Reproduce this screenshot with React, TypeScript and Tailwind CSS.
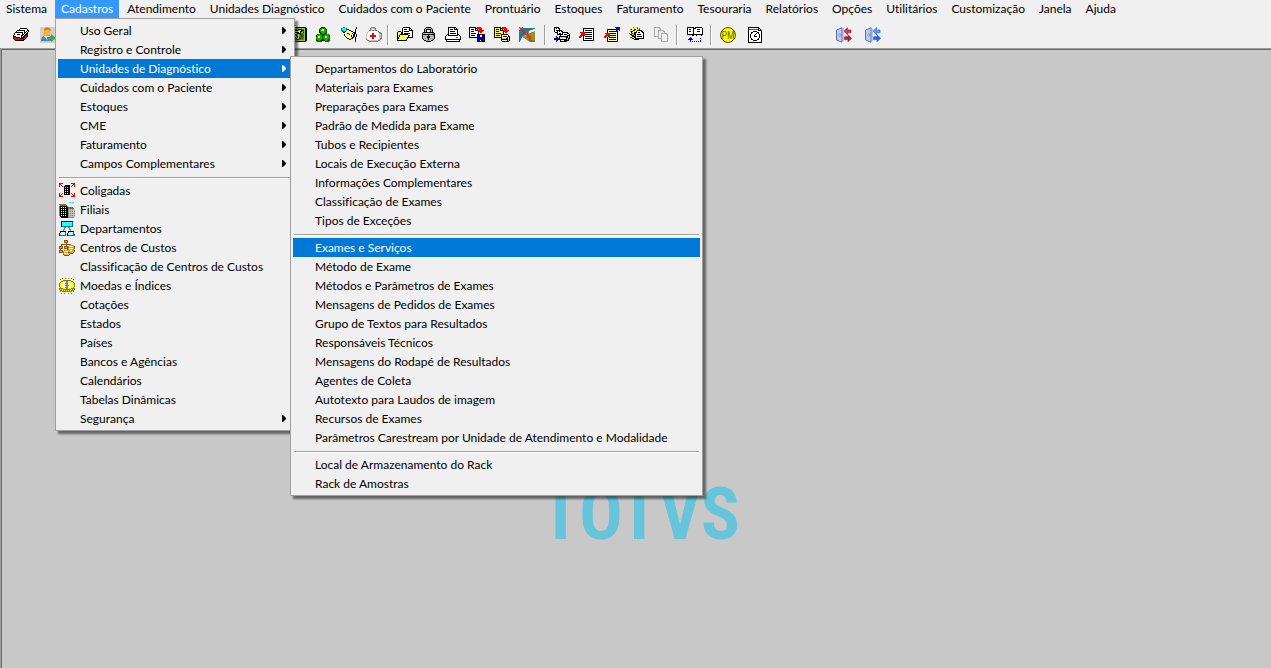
import type { ReactNode } from "react";
import clsx from "clsx";

type MenuEntry = {
  label: string;
  icon?: ReactNode;
  submenu?: boolean;
};

const COLORS: Record<string, string> = {
  k: "#000000",
  w: "#ffffff",
  y: "#ffff00",
  Y: "#ffff99",
  o: "#808000",
  r: "#ff0000",
  g: "#808080",
  a: "#a8a8a8",
  l: "#c0c0c0",
  b: "#0000ff",
  n: "#000080",
  t: "#008080",
  c: "#00ffff",
  C: "#a6f4f4",
  G: "#00b400",
  D: "#006400",
  L: "#7fd03c",
  B: "#8a5a1c",
  T: "#d8a850",
};

/** 16px bitmap icon, one character per pixel. */
function PixelIcon({ rows }: { rows: string[] }) {
  const rects: ReactNode[] = [];
  rows.forEach((row, y) => {
    let x = 0;
    while (x < row.length) {
      const ch = row[x];
      let end = x + 1;
      while (end < row.length && row[end] === ch) end += 1;
      if (COLORS[ch]) {
        rects.push(
          <rect key={`${x}-${y}`} x={x} y={y} width={end - x} height={1} fill={COLORS[ch]} />
        );
      }
      x = end;
    }
  });
  return (
    <svg viewBox="0 0 16 16" className="size-4 shrink-0" shapeRendering="crispEdges" aria-hidden="true">
      {rects}
    </svg>
  );
}

const CARDS = [
  "................",
  ".......kkkkkkk..",
  "......kwwwwwwwk.",
  "....kkkkkkkkwwkk",
  "...kwwwwwwwkwkwk",
  "..kkkkkkkkwkkwk.",
  ".kwwwwwwwkwkwkk.",
  ".kwwkkkwwkkwkkk.",
  "kwwwwwwwkkwkkrk.",
  "kkkwwwwwkwkkrrk.",
  "krrkkkkwkkkrrk..",
  "krrrrrrkkkrrk...",
  ".krrrrrrrrkk....",
  "..kkkkkkkkk.....",
];

const GREEN_BOOK = [
  "kkkkkkkkkkkkkkk.",
  "kLLLLLLLLLLLLLkk",
  "kLGGGGGkkkkGGLkk",
  "kLGkkkkLyykkkLkk",
  "kLGkyyyyykkGGLkk",
  "kLGGkkkkykLLkLkk",
  "kLGGyykkkkGGGLkk",
  "kLGkkGGyGkkGGLkk",
  "kLGyGkGyGGrrrLkk",
  "kLGkyGkyGGkkGLkk",
  "kLGGkykykGGrGLkk",
  "kLGGGkyykkGrGLkk",
  "kLGGGGkkGGGGGLkk",
  "kLLLLLLLLLLLLLkk",
  "kkkkkkkkkkkkkkk.",
];

const CLUSTER = [
  ".....kkkk.......",
  "....kGGGGk......",
  "...kGGyyGGD.....",
  "...kGyyyGGD.....",
  "...kGGGGGGD.....",
  "...kDGGGGDD.....",
  "....kDGGDDk.....",
  ".kGGGkDDkGGGk...",
  "kGGGGGkkGGGGGD..",
  "kGyyGGDGGyyGGD..",
  "GGyyGGDGGyyGGD..",
  "GGGGGGDGGGGGGD..",
  "kGGGGDDkGGGGDD..",
  "kDGGDDkkDGGDDk..",
  ".kDDDk...kDDk...",
];

const HAND = [
  "..tt...........k",
  "tcccct.........k",
  "tccccttk......k.",
  "ttccctYYkk....k.",
  ".nttkYYYYYkk..k.",
  "..nkYYYYYYYYkkk.",
  "...YYYkkYYYkYkk.",
  "...kYYYYkYYYkkyk",
  "...kYYYYYYkYkkyk",
  "....kYYYYYkYkkyk",
  ".....kYYYYYkk.k.",
  "......kkYYkk..k.",
  "........kk....k.",
  "..............k.",
  "..............k.",
];

const KIT = [
  ".....gggg.......",
  "....gllllg......",
  "....gl..lg......",
  "...gglgglggl....",
  "..lwwwwwwwwlg...",
  ".lwwwwwwwwwwlgg.",
  ".lwwwwrrwwwwwlgg",
  "lwwwwwrrwwwwwllg",
  "lwwwrrrrrrwwwllg",
  "lwwwrrrrrrwwwllg",
  "lwwwwwrrwwwwwllg",
  "lwwwwwrrwwwwwlgg",
  "glwwwwwwwwwwllg.",
  ".gglllllllllgg..",
  "...ggggggggg....",
];

const FOLDER = [
  "......kkkkkkk...",
  ".....kwwwwwwkk..",
  ".....kwkkkwwkwk.",
  ".....kwwwwwwkkkk",
  ".kkk.kwkkkkkwwwk",
  "kYyYkkwwwwwwwwwk",
  "kyYykkwkkkkkkwwk",
  "kYykkkkkkkkwwwwk",
  "kykYyYyYyYykkwwk",
  "kykyYyYyYyYkwwwk",
  "kkYyYyYyYykkkkkk",
  "kkyYyYyYyYk.....",
  "kYyYyYyYyk......",
  "kkkkkkkkkk......",
];

const LOCK = [
  ".....kkkkk......",
  "....klllllk.....",
  "...klkkkkklk....",
  "...klk...klk....",
  "...klk...klk....",
  "..kkkkkkkkkkk...",
  ".klllllllllggk..",
  ".kkkkkkkkkkkkk..",
  ".klllllkllllgk..",
  ".kaaaakkkaaaak..",
  ".kllllkkkllllk..",
  ".kaaaaakaaaaak..",
  "..kllllklllgk...",
  "...kkaaaaakk....",
  ".....kkkkk......",
];

const PRINTER = [
  "...kkkkkkkk.....",
  "...kwwwwwkwk....",
  "...kwkkkwkkkk...",
  "...kwwwwwwwwk...",
  "...kwkkkkkwwk...",
  "...kwwwwwwwwk...",
  "...kwkkkkkkwk...",
  "..kkwwwwwwwwkk..",
  ".kwkkkkkkkkkkwk.",
  "kwwwwwwwwwwwwwwk",
  "kwwwwwwwwwwrrwwk",
  "kwwwwwwwwwwwwwwk",
  "kkkkkkkkkkkkkkkk",
  ".kwwwwwwwwwwwwk.",
  ".kkkkkkkkkkkkkk.",
];

const SAVE = [
  "kkkkkkk.rrrr....",
  "kwwwwwkkrrrrr...",
  "kwkkkwkwk.rrr...",
  "kwwwwwkkkrrrrrr.",
  "kwkkkwwwwkrrrr..",
  "kwwwwwwwwk.rr...",
  "kwkkkkkwwk......",
  "kwwwwwwwkkkkkkkk",
  "kwkkkkwwkbkwwkbk",
  "kwwwwwwwkbkwwkbk",
  "kkkkkkkkkbkkkkbk",
  "........kbbbbbbk",
  "........kbkkkkbk",
  "........kbkwkkbk",
  "........kkkkkkkk",
];

const EXPORT = [
  "kkkkkkk.rrrr....",
  "kyyyyykkrrrrr...",
  "kykkkykyk.rrr...",
  "kyyyyykkkrrrrrr.",
  "kykkkyyyykrrrr..",
  "kyyyyyyyyk.rr...",
  "kykkkkkyyk......",
  "kyyyyyykkkkkkk..",
  "kykkkkykwwwwwwk.",
  "kyyyyyykwkkkkwkk",
  "kkkkkkkkwwwwwkwk",
  ".......kllllkkwk",
  ".......kkkkkkklk",
  ".......kYYYYYklk",
  "........kkkkkkk.",
];

const SEND = [
  "kkkkk...........",
  "kwkwkk..........",
  "kwwwwk..........",
  "kwkkkkkk........",
  "kwwkwkwkk.......",
  ".kkkwwwwkkkkkk..",
  "...kwkkwkwwwwkk.",
  "...kkkkkkwkkkwwk",
  "......kwwwwwwkkk",
  "..n..kkkkkkkkkwk",
  "..nn.kllllllkklk",
  "nnnnnkwwwwwwklkk",
  "nnnnnkkkkkkkklk.",
  "..nn..kyyykkkkk.",
  "..n...kkkkkkk...",
];

const REPORT = [
  "................",
  "....kkkkkkkkkkk.",
  "....kwwwwwwwwwk.",
  "....kwkkkkkkkwk.",
  "....kwwwwwwwwwk.",
  ".rrrrrkkkkkkkwk.",
  "..rrrrwwwwwwwwk.",
  "..rrrrkkkkkkkwk.",
  ".rrrkrwwwwwwwwk.",
  "rrr.kwkkkkkkkwk.",
  "rr..kwwwwwwwwwk.",
  "....kwkkkkkkkwk.",
  "....kwwwwwwwwwk.",
  "....kkkkkkkkkkk.",
];

const REPORT_OUT = [
  "...........bbbbb",
  "............bbbb",
  "...kkkkkkkkkkbbb",
  "...kYYYYYYYYbb.b",
  "...kYkkkkkkbbk..",
  "...kYYYYYYYYYk..",
  ".rrrrrkkkkkkYk..",
  "..rrrrYYYYYYYk..",
  ".rrrrrkkkkkkYk..",
  "rrr.krYYYYYYYk..",
  "rr.kYkkkkkkkYk..",
  "...kYYYYYYYYYk..",
  "...kYkkkkkkkYk..",
  "...kYYYYYYYYYk..",
  "...kkkkkkkkkkk..",
];

const STACK = [
  "....oyyyo.......",
  "..yyYYyykyo.....",
  ".okyykkyyyk.....",
  "..yykkyykkkkk...",
  ".okkyyykwwwwkk..",
  "..kyykkkwkkwwkk.",
  "o.okykkwwwwwwwk.",
  ".kkyokkwkkkkwwk.",
  "..okkykwwwwwwwk.",
  "...kkkkwkkkkkwk.",
  ".okyykkwwwwwwwk.",
  "...kkykkkkkkkkk.",
  ".....kkkkk......",
];

const COPY = [
  "aaaaaa..........",
  "a....aa.........",
  "a.....a.........",
  "a...aaaaaa......",
  "a...a....aa.....",
  "a...a.....a.....",
  "a...a..aaaaaa...",
  "a...a..a....aa..",
  "a...a..a.....a..",
  "aaaaa..a.....a..",
  "....a..a.....a..",
  "....aaaa.....a..",
  ".......a.....a..",
  ".......a.....a..",
  ".......aaaaaaa..",
];

const BOOKS = [
  "kkkkkkk.kkkkkkk.",
  "kwwwwwkkkwwwwwwk",
  "kwkkwwkwwwkkkwwk",
  "kwwwwwkwwwwwwwwk",
  "kwkkwwkwwwkkkwwk",
  "kwwwwwkwwwwwwwwk",
  "kwwwwwkwwwwwwwwk",
  "kkkkkkkkkkkkkkkk",
  ".yyyykk..kyyyyk.",
  "................",
  "...b............",
  "..bbb........b..",
  ".bbbbb..........",
  "...b.........b..",
  "...b.b.b.b.b.b..",
];

const CLOCK_PAGE = [
  "kkkkkkkkkkk.....",
  "kwwwwwwwwwkk....",
  "krrrrrrrrrkwk...",
  "kwwwwwwwwwkkkk..",
  "kwwwwkkkkwwwwk..",
  "kwwkkwwwwkkwwk..",
  "kwwkwwwwkwkwwk..",
  "kwkwwwwkwwwkwk..",
  "kwkwwwkwwwwkwk..",
  "kwkwwwkkkwwkwk..",
  "kwkwwwwwwwwkwk..",
  "kwwkwwwwwwkwwk..",
  "kwwkkwwwwkkwwk..",
  "kwwwwkkkkwwwwk..",
  "kwwwwwwwwwwwwk..",
  "kkkkkkkkkkkkkk..",
];

const AFFILIATED = [
  "rrrr........rrrr",
  "rr............rr",
  "r.r...kkkkk..r.r",
  "r..r.kkkkkk.r..r",
  ".....kykykk.....",
  ".....kkkkkk.....",
  ".....kykykk.....",
  ".....kkkkkk.....",
  ".....kykykk.....",
  ".....kkkkkk.....",
  "r..r.kykykk.r..r",
  "r.r..kkkkkk..r.r",
  "rr............rr",
  "rrrr........rrrr",
];

const BRANCHES = [
  "..........cc.cc.",
  "................",
  "ooooooo.........",
  ".ooooooo........",
  "gkkkkkkko.......",
  "gkwkwkwkkooooo..",
  "gkkkkkkkkgooooo.",
  "gkwkwkwkkglglgll",
  "gkkkkkkkkgllllll",
  "gkwkwkwkkglglglg",
  "gkkkkkkkkgllllll",
  "gkwkwkwkkglglglg",
  "gkkkkkkkkgllllll",
  "gkwkwkwkkglglglg",
  ".kkkkkkkkgllllll",
  "..kkkkkkkgggggg.",
];

const DEPARTMENTS = [
  "..kkkkkkkkkkkk..",
  "..kcCcCcCcCcCt..",
  "..kCcCcCcCcCct..",
  "..kcCcCcCcCcCt..",
  "..kCcCcCcCcCct..",
  "..kttttttttttt..",
  ".....gg..gg.....",
  ".....g....g.....",
  "....gg....gg....",
  "....g......g....",
  ".kkkkkk..kkkkkk.",
  ".kwCwCt..kwCwCt.",
  "kwCwCwt.kwCwCwt.",
  "kCwCwCt.kCwCwCtt",
  "ktttttt.kttttttt",
];

const COST_CENTERS = [
  ".....BBBB.......",
  ".....BTTB.......",
  ".....BBBB.......",
  ".......B........",
  "..BBBBBBBBBB....",
  "..B....B..TTTTT.",
  "BBBB.BBBBTYYYYTB",
  "BTTB.BTTBBTTTTTB",
  "BBBB.BBBBTYYYYTB",
  ".B......BBTTTTB.",
  "BBBB.BTTTTTYYTTB",
  "BTTBTYYYYTTTTTTB",
  "BBBBBTTTTBBTTTB.",
  "....TYYYYTTBBB..",
  "....BTTTTTB.....",
  ".....BBBBB......",
];

const COINS = [
  "...o..o..o..o...",
  ".o............o.",
  "....oooooooo....",
  "..ooyyYggYyyoo..",
  ".oyyYYwggwYyyyo.",
  "oyyYYYgggwYYyyyo",
  "oyYYYwwggwwYYyyo",
  "oyyYYYggggwYyyyo",
  "oyyYYYwggwYYyyyo",
  ".oyyYYgggwYyyyo.",
  "ooooyyYggYyyoooo",
  "oyoyooooooooyoyo",
  ".ooyoyoyoyoyooo.",
  ".o.oooooooooo.o.",
  "................",
  "..o..o...o..o...",
];

function UserIcon() {
  return (
    <svg viewBox="0 0 16 16" className="size-4 shrink-0" aria-hidden="true">
      <rect width="16" height="16" fill="#d8cfbf" />
      <path d="M1 14c0-4 3-6 6-6s6 2 6 6z" fill="#3f86cf" />
      <path d="M4 9h6l-3 4z" fill="#dcecff" />
      <ellipse cx="7" cy="5" rx="3.3" ry="4.3" fill="#f2b632" />
      <path d="M4 4c0-5 7-4 7 0-2-1-5-2-7 0z" fill="#c77a17" />
      <path d="M7 10h4V7l5 4-5 4v-3H7z" fill="#46a642" />
    </svg>
  );
}

function XmlIcon() {
  return (
    <svg viewBox="0 0 16 16" className="size-4 shrink-0" aria-hidden="true">
      <path d="M2 1h14v1C10 3 4 7 1 15H0V5z" fill="#1a8090" />
      <path d="M16 4v11h-4C9 15 7 11 4 11 7 7 11 5 16 4z" fill="#89942c" />
      <path d="M1 15C4 8 9 4 16 3v1C10 5 6 8 3 15z" fill="#ffffff" />
      <path
        d="M0 0l4 4M4 0L0 4M5 11V5l2 3 2-3v6M11 9v5h4"
        fill="none"
        stroke="#e01818"
        strokeWidth="1.2"
      />
    </svg>
  );
}

function PmIcon() {
  return (
    <svg viewBox="0 0 16 16" className="size-4 shrink-0" aria-hidden="true">
      <circle cx="8" cy="8" r="7.4" fill="#ffff00" stroke="#4a4a00" />
      <text
        x="8"
        y="11.5"
        textAnchor="middle"
        fontFamily="Roboto Condensed, Roboto, sans-serif"
        fontSize="10"
        fill="#707000"
      >
        PM
      </text>
    </svg>
  );
}

function DoorIcon({ color, light }: { color: string; light: string }) {
  return (
    <svg viewBox="0 0 16 16" className="size-4 shrink-0" aria-hidden="true">
      <path d="M.5 3L6 .8v14.4L.5 13z" fill="#b9cdf2" stroke="#5d70ae" />
      <path d="M6.5 1.5h1v13h-1z" fill="#8b97c6" />
      <circle cx="3.8" cy="8" r="1.1" fill="#ffffff" stroke="#4c5e9c" strokeWidth=".6" />
      <path d="M8 4.2L11.5.8V3H15v2.8h-3.5v2z" fill={light} stroke={color} strokeWidth=".7" />
      <path d="M15.6 11.2L12 7.8v2H8.5v2.8H12v2.2z" fill={color} stroke={color} strokeWidth=".7" />
    </svg>
  );
}

const MENU_BAR = [
  "Sistema",
  "Cadastros",
  "Atendimento",
  "Unidades Diagnóstico",
  "Cuidados com o Paciente",
  "Prontuário",
  "Estoques",
  "Faturamento",
  "Tesouraria",
  "Relatórios",
  "Opções",
  "Utilitários",
  "Customização",
  "Janela",
  "Ajuda",
];

const CADASTROS: MenuEntry[][] = [
  [
    { label: "Uso Geral", submenu: true },
    { label: "Registro e Controle", submenu: true },
    { label: "Unidades de Diagnóstico", submenu: true },
    { label: "Cuidados com o Paciente", submenu: true },
    { label: "Estoques", submenu: true },
    { label: "CME", submenu: true },
    { label: "Faturamento", submenu: true },
    { label: "Campos Complementares", submenu: true },
  ],
  [
    { label: "Coligadas", icon: <PixelIcon rows={AFFILIATED} /> },
    { label: "Filiais", icon: <PixelIcon rows={BRANCHES} /> },
    { label: "Departamentos", icon: <PixelIcon rows={DEPARTMENTS} /> },
    { label: "Centros de Custos", icon: <PixelIcon rows={COST_CENTERS} /> },
    { label: "Classificação de Centros de Custos" },
    { label: "Moedas e Índices", icon: <PixelIcon rows={COINS} /> },
    { label: "Cotações" },
    { label: "Estados" },
    { label: "Países" },
    { label: "Bancos e Agências" },
    { label: "Calendários" },
    { label: "Tabelas Dinâmicas" },
    { label: "Segurança", submenu: true },
  ],
];

const DIAGNOSTICO: MenuEntry[][] = [
  [
    { label: "Departamentos do Laboratório" },
    { label: "Materiais para Exames" },
    { label: "Preparações para Exames" },
    { label: "Padrão de Medida para Exame" },
    { label: "Tubos e Recipientes" },
    { label: "Locais de Execução Externa" },
    { label: "Informações Complementares" },
    { label: "Classificação de Exames" },
    { label: "Tipos de Exceções" },
  ],
  [
    { label: "Exames e Serviços" },
    { label: "Método de Exame" },
    { label: "Métodos e Parâmetros de Exames" },
    { label: "Mensagens de Pedidos de Exames" },
    { label: "Grupo de Textos para Resultados" },
    { label: "Responsáveis Técnicos" },
    { label: "Mensagens do Rodapé de Resultados" },
    { label: "Agentes de Coleta" },
    { label: "Autotexto para Laudos de imagem" },
    { label: "Recursos de Exames" },
    { label: "Parâmetros Carestream por Unidade de Atendimento e Modalidade" },
  ],
  [{ label: "Local de Armazenamento do Rack" }, { label: "Rack de Amostras" }],
];

function Menu({
  groups,
  active,
  className,
  children,
}: {
  groups: MenuEntry[][];
  active: string;
  className?: string;
  children?: ReactNode;
}) {
  return (
    <div
      role="menu"
      className={clsx(
        "absolute border border-[#a0a0a0] bg-[#f0f0f0] p-[2px] text-black shadow-[3px_3px_2px_rgba(0,0,0,0.5)]",
        className
      )}
    >
      {groups.map((group, index) => (
        <div key={group[0].label}>
          {index > 0 && (
            <div role="separator" className="px-px pt-1 pb-[2px]">
              <div className="border-t border-b border-t-[#a0a0a0] border-b-white" />
            </div>
          )}
          {group.map((entry) => (
            <div key={entry.label} className="relative">
              <button
                type="button"
                role="menuitem"
                className={clsx(
                  "flex h-[19px] w-full items-center gap-[5px] pr-1 pl-px text-left whitespace-nowrap",
                  entry.label === active && "bg-[#0078d7] text-white"
                )}
              >
                <span className="flex w-4 shrink-0">{entry.icon}</span>
                <span className="flex-1">{entry.label}</span>
                {entry.submenu && (
                  <svg viewBox="0 0 4 7" className="mr-[2px] h-[7px] w-1" aria-hidden="true">
                    <path d="M0 0h1l3 3v1L1 7H0z" fill="currentColor" />
                  </svg>
                )}
              </button>
              {entry.label === active && children}
            </div>
          ))}
        </div>
      ))}
    </div>
  );
}

function ToolButton({ label, children }: { label: string; children: ReactNode }) {
  return (
    <button type="button" aria-label={label} className="flex size-4 shrink-0">
      {children}
    </button>
  );
}

function Divider() {
  return <div className="h-5 w-[2px] shrink-0 border-l border-[#a0a0a0] bg-white" />;
}

export default function App() {
  return (
    <div className="flex min-h-screen flex-col overflow-hidden bg-[#f0f0f0] font-['Lato','Open_Sans',sans-serif] text-[12px] leading-[18px] text-black [font-variant-ligatures:none]">
      <nav className="relative z-10 flex h-[18px] shrink-0 gap-[2px]">
        {MENU_BAR.map((label) => (
          <div key={label} className="relative">
            <button
              type="button"
              className={clsx(
                "h-[18px] px-[6px] whitespace-nowrap",
                label === "Cadastros" && "bg-[#3399ff] text-white"
              )}
            >
              {label}
            </button>
            {label === "Cadastros" && (
              <Menu
                groups={CADASTROS}
                active="Unidades de Diagnóstico"
                className="top-full left-0 w-60"
              >
                <Menu
                  groups={DIAGNOSTICO}
                  active="Exames e Serviços"
                  className="-top-[3px] left-full -ml-[2px] w-[413px]"
                />
              </Menu>
            )}
          </div>
        ))}
      </nav>

      <div className="flex h-[30px] shrink-0 items-center pt-[4px] pl-[13px]">
        <div className="flex gap-[11px]">
          <ToolButton label="Fichas">
            <PixelIcon rows={CARDS} />
          </ToolButton>
          <ToolButton label="Pacientes">
            <UserIcon />
          </ToolButton>
        </div>
        <div className="ml-[235px] flex gap-[9px]">
          <ToolButton label="Livro">
            <PixelIcon rows={GREEN_BOOK} />
          </ToolButton>
          <ToolButton label="Amostras">
            <PixelIcon rows={CLUSTER} />
          </ToolButton>
          <ToolButton label="Coleta">
            <PixelIcon rows={HAND} />
          </ToolButton>
          <ToolButton label="Enfermagem">
            <PixelIcon rows={KIT} />
          </ToolButton>
        </div>
        <div className="ml-[5px] flex items-center gap-2">
          <Divider />
          <ToolButton label="Abrir">
            <PixelIcon rows={FOLDER} />
          </ToolButton>
          <ToolButton label="Bloquear">
            <PixelIcon rows={LOCK} />
          </ToolButton>
          <ToolButton label="Imprimir">
            <PixelIcon rows={PRINTER} />
          </ToolButton>
          <ToolButton label="Salvar">
            <PixelIcon rows={SAVE} />
          </ToolButton>
        </div>
        <div className="ml-[9px] flex items-center gap-[9px]">
          <ToolButton label="Exportar">
            <PixelIcon rows={EXPORT} />
          </ToolButton>
          <ToolButton label="XML">
            <XmlIcon />
          </ToolButton>
          <Divider />
        </div>
        <div className="ml-2 flex gap-[9px]">
          <ToolButton label="Enviar">
            <PixelIcon rows={SEND} />
          </ToolButton>
          <ToolButton label="Relatório">
            <PixelIcon rows={REPORT} />
          </ToolButton>
          <ToolButton label="Publicar">
            <PixelIcon rows={REPORT_OUT} />
          </ToolButton>
          <ToolButton label="Lotes">
            <PixelIcon rows={STACK} />
          </ToolButton>
          <ToolButton label="Copiar">
            <PixelIcon rows={COPY} />
          </ToolButton>
        </div>
        <div className="ml-[6px] flex items-center gap-[9px]">
          <Divider />
          <ToolButton label="Comparar">
            <PixelIcon rows={BOOKS} />
          </ToolButton>
        </div>
        <div className="ml-[7px] flex items-center gap-2">
          <Divider />
          <ToolButton label="PM">
            <PmIcon />
          </ToolButton>
        </div>
        <div className="ml-[12px] flex">
          <ToolButton label="Agenda">
            <PixelIcon rows={CLOCK_PAGE} />
          </ToolButton>
        </div>
        <div className="ml-[72px] flex gap-[13px]">
          <ToolButton label="Sair">
            <DoorIcon color="#a5213f" light="#c23a55" />
          </ToolButton>
          <ToolButton label="Trocar usuário">
            <DoorIcon color="#2a66e0" light="#5e9bff" />
          </ToolButton>
        </div>
      </div>

      <div className="flex flex-1 flex-col border-t border-l border-[#a0a0a0]">
        <main className="flex flex-1 justify-center border-t border-l border-[#696969] bg-[#c8c8c8] pt-[425px] pl-2">
          <div className="font-['Roboto_Condensed','Roboto',sans-serif] text-[72px] leading-[80px] font-bold text-[#66c5da]">
            TOTVS
          </div>
        </main>
      </div>
    </div>
  );
}
